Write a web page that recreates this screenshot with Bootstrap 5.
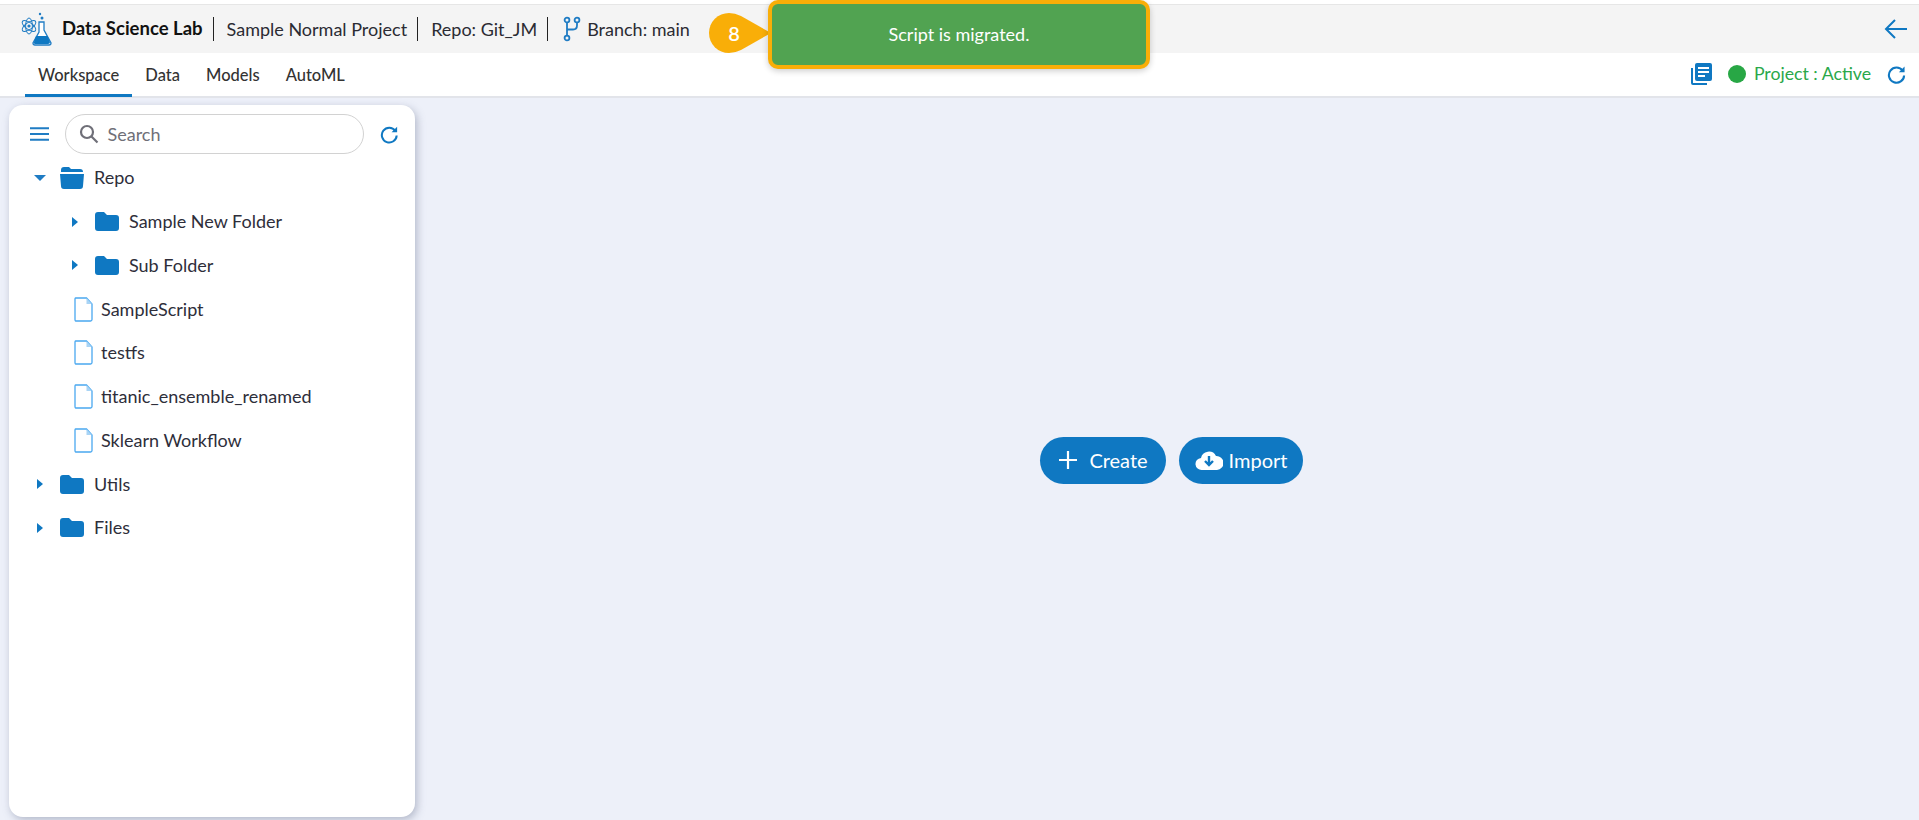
<!DOCTYPE html>
<html lang="en">
<head>
  <meta charset="UTF-8">
  <title>Data Science Lab</title>
  <meta name="viewport" content="width=device-width, initial-scale=1" />
  <link href="https://cdn.jsdelivr.net/npm/bootstrap@5.3.0/dist/css/bootstrap.min.css" rel="stylesheet">
  <style>
    html, body { height: 100%; }
    body {
      background: #edf0f9;
      font-family: "Lato", "Noto Sans", sans-serif;
      color: #2b2b33;
      overflow: hidden;
      display: flex;
      flex-direction: column;
    }
    .top-strip { height: 5px; background: #fff; border-bottom: 1px solid #e6e6e6; }
    .head-bar { height: 48px; background: #f4f4f4; padding-left: 20px; padding-right: 11px; font-size: 18px; }
    .app-name { font-weight: 700; font-size: 18.5px; color: #111; margin-left: 10px; }
    .sep { width: 1px; height: 24px; background: #222; margin: 0 13px 0 10px; }
    .branch-icon { margin-right: 6px; margin-left: 2px; }
    .tab-bar { height: 45px; background: #fff; border-bottom: 2px solid #e2e4ea; padding-left: 25px; padding-right: 13px; }
    .tab-item { height: 44px; padding: 0 13px; font-size: 16.5px; font-weight: 500; color: #333; display: flex; align-items: center; text-decoration: none; }
    .tab-item.active-tab { border-bottom: 3px solid #0f78c2; padding-top: 3px; }
    .status-group { height: 42px; }
    .status-txt { color: #2aa84a; font-size: 17.7px; }
    .status-dot { width: 18px; height: 18px; border-radius: 50%; background: #28a745; }
    .work-area { flex: 1; min-height: 0; padding: 7px 0 3px 9px; }
    .side-panel { width: 406px; height: 100%; background: #fff; border-radius: 14px; box-shadow: 2px 3px 8px rgba(90,100,130,.4); padding: 9px 16px 0 20px; }
    .menu-icon { margin-left: 1px; }
    .search-pill { width: 299px; height: 40px; border: 1px solid #d2d2d2; border-radius: 20px; padding-left: 13px; margin: 0 16px; color: #6f6f78; font-size: 18px; }
    .tree-list { margin-top: -2px; }
    .tree-row { height: 43.75px; font-size: 18px; color: #2e2e3a; }
    .tree-row .lbl { margin-left: 10px; }
    .tree-row .file-lbl { margin-left: 8px; }
    .caret-box { width: 12px; display: inline-flex; justify-content: center; margin-right: 14px; }
    .lvl0 { padding-left: 5px; }
    .lvl1 { padding-left: 40px; }
    .lvl-file { padding-left: 45px; }
    .main-pane { flex: 1; padding-left: 9px; padding-bottom: 2px; }
    .pill-btn { height: 47px; border-radius: 24px; background: #0f78c2; color: #fff; font-size: 20px; border: 0; padding: 0; }
    .pill-create { width: 126px; margin-right: 13px; }
    .pill-import { width: 124px; }
    .plus-icon { margin-right: 11px; }
    .cloud-icon { margin-right: 6px; }
    .toast-box { position: absolute; left: 768px; top: 0; width: 382px; height: 69px; background: #51a351; border: 4px solid #f9ae08; border-radius: 10px; color: #fff; font-size: 18px; box-shadow: 0 2px 6px rgba(0,0,0,.2); }
    .step-mark { position: absolute; left: 709px; top: 13px; }
    .step-mark span { position: absolute; left: 0; top: 0; width: 50px; height: 40px; line-height: 40px; text-align: center; color: #fff; font-size: 20px; font-weight: 600; }
  </style>
</head>
<body>
  <div class="top-strip"></div>

  <div class="head-bar d-flex align-items-center">
    <svg width="32" height="34" viewBox="0 0 32 34">
      <g fill="none" stroke="#1f7cc4" stroke-width="1">
        <ellipse cx="9" cy="14" rx="8" ry="3.4" transform="rotate(35 9 14)"/>
        <ellipse cx="9" cy="14" rx="8" ry="3.4" transform="rotate(-35 9 14)"/>
        <ellipse cx="9" cy="14" rx="3.4" ry="8"/>
      </g>
      <circle cx="9" cy="14" r="1.6" fill="#1f7cc4"/>
      <path d="M19 10h5v8l7 13q0 2-2 2H15q-2 0-2-2l6-11z" fill="#fff" stroke="#1f7cc4" stroke-width="1.3"/>
      <path d="M16 24h11.5l2.5 6q0 2-2 2H15q-1.500 0-1-2z" fill="#0f78c2"/>
      <circle cx="22" cy="6" r="1.500" fill="#1f7cc4"/><circle cx="20" cy="2" r="1.200" fill="#1f7cc4"/>
    </svg>
    <span class="app-name">Data Science Lab</span>
    <span class="sep"></span>
    <span>Sample Normal Project</span>
    <span class="sep"></span>
    <span>Repo: Git_JM</span>
    <span class="sep"></span>
    <svg class="branch-icon" width="18" height="26" viewBox="0 0 18 26" fill="none" stroke="#1f7cc4" stroke-width="1.800">
      <circle cx="4" cy="4" r="2.400"/><circle cx="14" cy="4" r="2.400"/><circle cx="4" cy="22" r="2.400"/>
      <path d="M4 6.500v13M14 6.500v3q0 4-4 4H4"/>
    </svg>
    <span>Branch: main</span>
    <svg class="ms-auto" width="24" height="22" viewBox="0 0 24 22" fill="none" stroke="#0f78c2" stroke-width="2">
      <path d="M23 11H2M11 2l-9 9 9 9"/>
    </svg>
  </div>

  <div class="tab-bar d-flex align-items-start">
    <a class="tab-item active-tab">Workspace</a>
    <a class="tab-item">Data</a>
    <a class="tab-item">Models</a>
    <a class="tab-item">AutoML</a>
    <div class="ms-auto d-flex align-items-center status-group">
      <svg width="22" height="22" viewBox="0 0 22 22">
        <path d="M1 5v15q0 2 2 2h14v-2H3V5z" fill="#0f78c2"/>
        <rect x="5" y="0" width="17" height="18" rx="2" fill="#0f78c2"/>
        <path d="M8 5h11M8 9h11M8 13h7" stroke="#fff" stroke-width="1.800"/>
      </svg>
      <span class="status-dot ms-3"></span>
      <span class="status-txt ms-2">Project : Active</span>
      <svg class="ms-3" width="19" height="19" viewBox="0 0 20 20" fill="none" stroke="#0f78c2" stroke-width="2.200">
        <path d="M16.500 6A8 8 0 1 0 18 11"/><path d="M18.500 1.500v6h-6z" fill="#0f78c2" stroke="none"/>
      </svg>
    </div>
  </div>

  <div class="work-area d-flex">
    <div class="side-panel">
      <div class="d-flex align-items-center mb-1">
        <svg class="menu-icon" width="20" height="14" viewBox="0 0 20 14" stroke="#1f7cc4" stroke-width="2"><path d="M0 1h20M0 7h20M0 13h20"/></svg>
        <div class="search-pill d-flex align-items-center flex-shrink-0">
          <svg class="me-2" width="20" height="20" viewBox="0 0 20 20" fill="none" stroke="#6f6f78" stroke-width="2.200"><circle cx="8" cy="8" r="6"/><path d="M12.500 12.500l6 6"/></svg>
          Search
        </div>
        <svg width="19" height="19" viewBox="0 0 20 20" fill="none" stroke="#0f78c2" stroke-width="2.200">
          <path d="M16.500 6A8 8 0 1 0 18 11"/><path d="M18.500 1.500v6h-6z" fill="#0f78c2" stroke="none"/>
        </svg>
      </div>

      <div id="tree" class="tree-list"></div>
    </div>

    <div class="main-pane d-flex align-items-center justify-content-center">
      <button class="pill-btn pill-create d-flex align-items-center justify-content-center">
        <svg class="plus-icon" width="20" height="20" viewBox="0 0 20 20" stroke="#fff" stroke-width="2.200"><path d="M10 1v18M1 10h18"/></svg>
        Create
      </button>
      <button class="pill-btn pill-import d-flex align-items-center justify-content-center">
        <svg class="cloud-icon" width="28" height="22" viewBox="0 0 28 22">
          <path d="M7 21a6 6 0 0 1-1-12 8 8 0 0 1 15-2 7 7 0 0 1 1 14z" fill="#fff"/>
          <path d="M14 7v8M10 12l4 4 4-4" stroke="#0f78c2" stroke-width="2.400" fill="none"/>
        </svg>
        Import
      </button>
    </div>
  </div>

  <svg class="step-mark" width="62" height="40" viewBox="0 0 62 40"><path d="M20 0q6 0 12 3l30 17-30 17q-6 3-12 3a20 20 0 0 1 0-40z" fill="#f9ae08"/></svg>
  <div class="step-mark"><span>8</span></div>
  <div class="toast-box d-flex align-items-center justify-content-center">Script is migrated.</div>

  <script src="https://cdn.jsdelivr.net/npm/bootstrap@5.3.0/dist/js/bootstrap.bundle.min.js"></script>
  <script>
    const folder = `<svg width="24" height="19" viewBox="0 0 24 19"><path d="M0 3q0-3 3-3h6l3 3h9q3 0 3 3v10q0 3-3 3H3q-3 0-3-3z" fill="#0f78c2"/></svg>`;
    const openFolder = `<svg width="24" height="22" viewBox="0 0 24 22"><path d="M1 3q0-3 3-3h5l2 2h9q3 0 3 3H1z" fill="#0f78c2"/><path d="M0 7h24l-1 12q0 3-3 3H4q-3 0-3-3z" fill="#0f78c2"/></svg>`;
    const fileIcon = `<svg width="19" height="25" viewBox="0 0 19 25"><path d="M1.500 1h11l5.500 6v15.500q0 1.500-1.500 1.500h-15q-.5 0-.5-1.500V2.500q0-1.500.500-1.500z" fill="#fff" stroke="#4aa8f0" stroke-width="1.300"/><path d="M12.500 1v6h5.500z" fill="#a9d4f5"/></svg>`;
    const caretRight = `<svg width="8" height="12" viewBox="0 0 8 12"><path d="M1 1l6 5-6 5z" fill="#0f78c2"/></svg>`;
    const caretDown = `<svg width="12" height="8" viewBox="0 0 12 8"><path d="M0 1h12L6 7z" fill="#1f7cc4"/></svg>`;

    const rows = [
      ['lvl0', caretDown, openFolder, 'Repo'],
      ['lvl1', caretRight, folder, 'Sample New Folder'],
      ['lvl1', caretRight, folder, 'Sub Folder'],
      ['lvl-file', '', fileIcon, 'SampleScript'],
      ['lvl-file', '', fileIcon, 'testfs'],
      ['lvl-file', '', fileIcon, 'titanic_ensemble_renamed'],
      ['lvl-file', '', fileIcon, 'Sklearn Workflow'],
      ['lvl0', caretRight, folder, 'Utils'],
      ['lvl0', caretRight, folder, 'Files']
    ];

    document.getElementById('tree').innerHTML = rows.map(([cls, caret, icon, label]) => `
      <div class="tree-row d-flex align-items-center ${cls}">
        ${caret ? `<span class="caret-box">${caret}</span>` : ''}<span class="d-inline-flex">${icon}</span><span class="${caret ? 'lbl' : 'file-lbl'}">${label}</span>
      </div>`).join('');
  </script>
</body>
</html>
